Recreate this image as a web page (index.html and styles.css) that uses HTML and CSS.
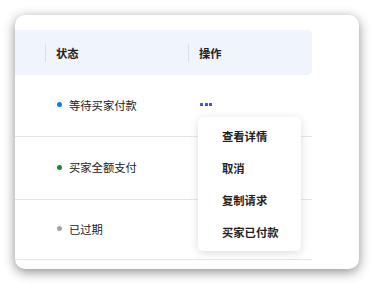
FILE: index.html
```html
<!DOCTYPE html>
<html lang="zh-CN">
<head>
    <meta charset="UTF-8">
    <meta name="viewport" content="width=device-width, initial-scale=1.0">
    <title>付款请求</title>
    <link rel="stylesheet" href="styles.css">
</head>
<body>
    <div class="card">
        <div class="table">
            <div class="row head">
                <div class="cell first"></div>
                <div class="cell status">状态</div>
                <div class="cell action">操作</div>
            </div>
            <div class="row">
                <div class="cell first"></div>
                <div class="cell status"><span class="dot blue"></span>等待买家付款</div>
                <div class="cell action">
                    <span class="more"><i></i><i></i><i></i></span>
                </div>
            </div>
            <div class="row">
                <div class="cell first"></div>
                <div class="cell status"><span class="dot green"></span>买家全额支付</div>
                <div class="cell action"></div>
            </div>
            <div class="row">
                <div class="cell first"></div>
                <div class="cell status"><span class="dot gray"></span>已过期</div>
                <div class="cell action"></div>
            </div>
        </div>

        <ul class="menu">
            <li>查看详情</li>
            <li>取消</li>
            <li>复制请求</li>
            <li>买家已付款</li>
        </ul>
    </div>
</body>
</html>
```

FILE: styles.css
```css
/* Global Styles */
body {
    margin: 0;
    padding: 15px;
    background-color: #ffffff;
    color: #222222;
    font-family: "Noto Sans CJK SC", "Noto Sans", sans-serif;
    font-size: 11.3px;
}

/* Card */
.card {
    position: relative;
    width: 344px;
    height: 254px;
    box-sizing: border-box;
    padding-top: 15px;
    background-color: #ffffff;
    border-radius: 10px;
    box-shadow: 0 3px 12px rgba(0, 0, 0, 0.45);
    overflow: hidden;
}

/* Table */
.table {
    width: 297px;
}

.row {
    display: grid;
    grid-template-columns: 30px 143px 124px;
    height: 62px;
    padding-bottom: 2px;
    border-bottom: 1px solid #e6e6e6;
    box-sizing: border-box;
}

.row:nth-child(3) {
    height: 63px;
}

.row:nth-child(4) {
    height: 60px;
}

.row.head {
    height: 45px;
    padding-bottom: 0;
    border-bottom: none;
    background-color: #f0f4fd;
    border-radius: 0 5px 5px 0;
    font-weight: bold;
    color: #1f1f1f;
}

.cell {
    display: flex;
    align-items: center;
    padding-left: 11px;
    position: relative;
}

.cell.first {
    padding-left: 0;
}

.head .cell.status::before,
.head .cell.action::before {
    content: "";
    position: absolute;
    left: 0;
    top: 14px;
    width: 1px;
    height: 18px;
    background-color: #dcdfe6;
}

/* Status dots */
.dot {
    width: 5px;
    height: 5px;
    border-radius: 50%;
    margin: 0 7px 0 1px;
}

.dot.blue {
    background-color: #1677e6;
}

.dot.green {
    background-color: #1a8a2a;
}

.dot.gray {
    background-color: #a3a3a3;
}

/* More button */
.more {
    display: flex;
    gap: 1.5px;
    padding-left: 1px;
}

.more i {
    width: 3px;
    height: 3px;
    border-radius: 0.5px;
    background-color: #3656f5;
}

/* Dropdown Menu */
.menu {
    position: absolute;
    left: 183px;
    top: 102px;
    width: 103px;
    margin: 0;
    padding: 3px 0;
    list-style: none;
    background-color: #ffffff;
    border-radius: 5px;
    box-shadow: 0 2px 10px rgba(0, 0, 0, 0.14);
}

.menu li {
    height: 32px;
    line-height: 32px;
    padding-left: 24px;
    font-weight: bold;
    color: #1f1f1f;
}
```
